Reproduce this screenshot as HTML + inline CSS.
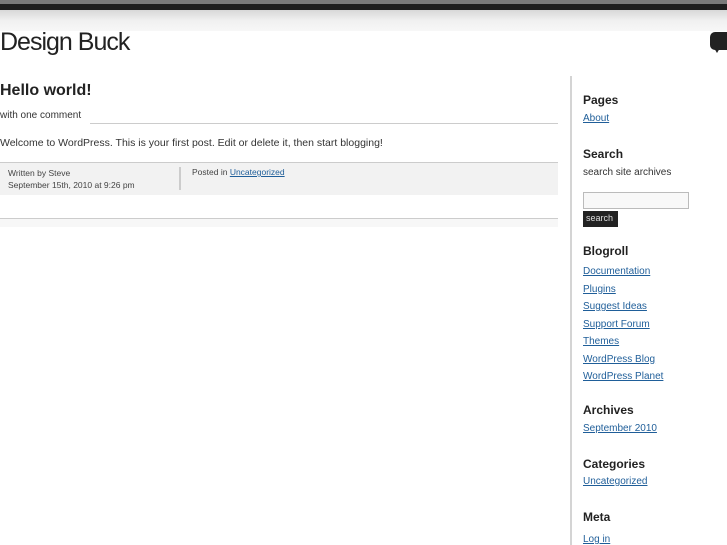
<!DOCTYPE html>
<html><head><style>
*{margin:0;padding:0;box-sizing:border-box}
body{width:727px;height:545px;overflow:hidden;background:#fff;font-family:"Liberation Sans",sans-serif;color:#333;position:relative}
.a{color:#1f5e99;text-decoration:underline}
.abs{position:absolute;white-space:nowrap}
.s{font-size:10px}
.h{font-size:12px;font-weight:bold;color:#222}
</style></head><body>
<div class="abs" style="left:0;top:0;width:727px;height:4px;background:#7a7a7a"></div>
<div class="abs" style="left:0;top:4px;width:727px;height:6px;background:#1e1e1e"></div>
<div class="abs" style="left:0;top:10px;width:727px;height:21px;background:linear-gradient(#d8d8d8,#f0f0f0 50%,#f7f7f7)"></div>
<div class="abs" style="left:0;top:28px;font-size:25px;color:#222;letter-spacing:-1px">Design Buck</div>
<div class="abs" style="left:710px;top:32px;width:17px;height:18px;background:#222;border-radius:5px 0 0 5px"></div>
<div class="abs" style="left:714px;top:48px;width:0;height:0;border-left:3px solid transparent;border-right:3px solid transparent;border-top:5px solid #222"></div>
<div class="abs" style="left:0;top:82px;font-size:16px;font-weight:bold;color:#222">Hello world!</div>
<div class="abs s" style="left:0;top:110px">with one comment</div>
<div class="abs" style="left:90px;top:123px;width:468px;height:1px;background:#ccc"></div>
<div class="abs" style="left:0;top:137px;font-size:10.5px">Welcome to WordPress. This is your first post. Edit or delete it, then start blogging!</div>
<div class="abs" style="left:0;top:162px;width:558px;height:33px;background:#f2f2f2;border-top:1px solid #ccc"></div>
<div class="abs" style="left:8px;top:167px;font-size:8.5px;line-height:12px;color:#444">Written by Steve<br>September 15th, 2010 at 9:26 pm</div>
<div class="abs" style="left:179px;top:167px;width:2px;height:23px;background:#ccc"></div>
<div class="abs" style="left:192px;top:167px;font-size:8.5px;color:#444">Posted in <span class="a">Uncategorized</span></div>
<div class="abs" style="left:0;top:218px;width:558px;height:9px;background:#f7f7f7;border-top:1px solid #ccc"></div>
<div class="abs" style="left:570px;top:76px;width:2px;height:469px;background:#d4d4d4"></div>
<div class="abs h" style="left:583px;top:93px">Pages</div>
<div class="abs s a" style="left:583px;top:113px">About</div>
<div class="abs h" style="left:583px;top:147px">Search</div>
<div class="abs s" style="left:583px;top:167px">search site archives</div>
<div class="abs" style="left:583px;top:192px;width:106px;height:17px;border:1px solid #bbb;background:#f8f8f8"></div>
<div class="abs" style="left:583px;top:211px;width:35px;height:16px;background:#222;color:#ddd;font-size:9px;padding:2px 0 0 3px">search</div>
<div class="abs h" style="left:583px;top:244px">Blogroll</div>
<div class="abs s" style="left:583px;top:263px;line-height:17.5px"><span class="a">Documentation</span><br><span class="a">Plugins</span><br><span class="a">Suggest Ideas</span><br><span class="a">Support Forum</span><br><span class="a">Themes</span><br><span class="a">WordPress Blog</span><br><span class="a">WordPress Planet</span></div>
<div class="abs h" style="left:583px;top:403px">Archives</div>
<div class="abs s a" style="left:583px;top:423px">September 2010</div>
<div class="abs h" style="left:583px;top:457px">Categories</div>
<div class="abs s a" style="left:583px;top:476px">Uncategorized</div>
<div class="abs h" style="left:583px;top:510px">Meta</div>
<div class="abs s a" style="left:583px;top:534px">Log in</div>
</body></html>
